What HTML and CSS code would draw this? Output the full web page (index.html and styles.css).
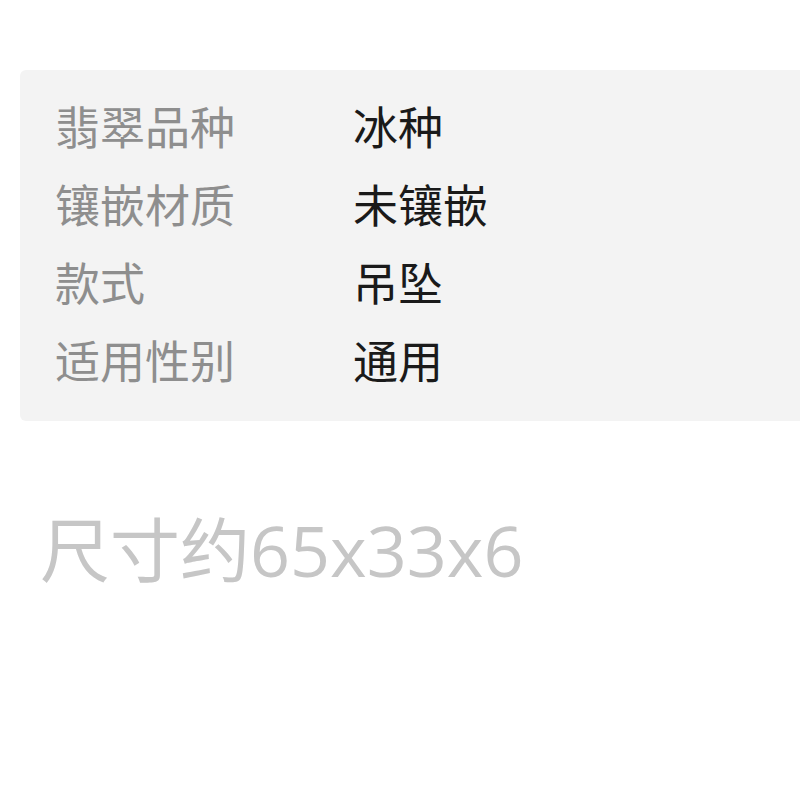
FILE: index.html
```html
<!DOCTYPE html>
<html>

<head>
  <title>商品参数</title>
  <link rel="stylesheet" href="styles.css">
</head>

<body>
  <main class="page">
    <dl class="params">
      <dt>翡翠品种</dt>
      <dd>冰种</dd>
      <dt>镶嵌材质</dt>
      <dd>未镶嵌</dd>
      <dt>款式</dt>
      <dd>吊坠</dd>
      <dt>适用性别</dt>
      <dd>通用</dd>
    </dl>

    <p class="size-note">尺寸约65x33x6</p>
  </main>
</body>

</html>
```

FILE: styles.css
```css
body {
  margin: 0;
  background-color: #fff;
  font-family: "Noto Sans CJK SC", "Noto Sans", sans-serif;
  overflow: hidden;
}

.page {
  padding-top: 70px;
}

/* parameter table, runs off the right edge */
.params {
  display: grid;
  grid-template-columns: 298px 1fr;
  margin: 0 -40px 0 20px;
  padding: 17px 0 22px 35px;
  background-color: #f3f3f3;
  border-radius: 6px;
  font-size: 45px;
  line-height: 78px;
}

.params dt {
  color: #8e8e8e;
}

.params dd {
  margin: 0;
  color: #1a1a1a;
}

.size-note {
  margin: 84px 0 0 40px;
  font-family: "Open Sans", "Noto Sans CJK SC", sans-serif;
  font-size: 70px;
  line-height: 90px;
  color: #c6c6c6;
}
```
